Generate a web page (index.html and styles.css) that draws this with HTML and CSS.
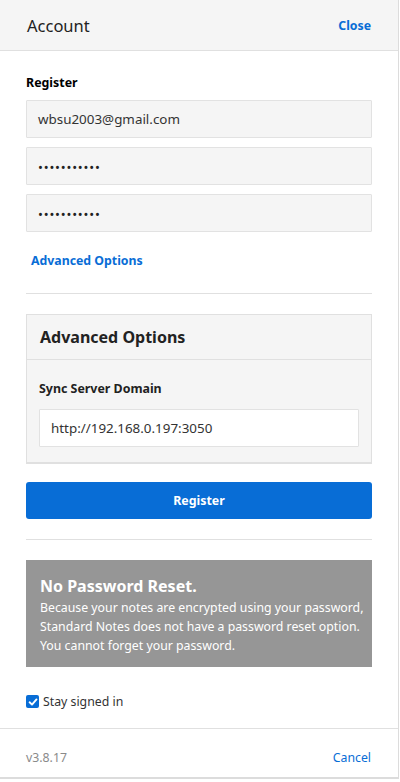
FILE: index.html
```html
<!DOCTYPE html>
<html>
<head>
<meta charset="utf-8">
<link rel="stylesheet" href="styles.css">
</head>
<body>
<div class="panel">
  <div class="header">
    <div class="title">Account</div>
    <a class="link bold">Close</a>
  </div>
  <div class="content">
    <div class="section-title">Register</div>
    <div class="fields">
      <div class="field">wbsu2003@gmail.com</div>
      <div class="field dots">•••••••••••</div>
      <div class="field dots">•••••••••••</div>
    </div>
    <a class="link bold adv-link">Advanced Options</a>
    <div class="hr first-hr"></div>
    <div class="adv">
      <div class="adv-head">Advanced Options</div>
      <div class="adv-body">
        <div class="adv-label">Sync Server Domain</div>
        <div class="field white">http://192.168.0.197:3050</div>
      </div>
    </div>
    <div class="button">Register</div>
    <div class="hr"></div>
    <div class="notice">
      <div class="notice-title">No Password Reset.</div>
      <div class="notice-text">Because your notes are encrypted using your password, Standard Notes does not have a password reset option. You cannot forget your password.</div>
    </div>
    <label class="check">
      <span class="box"><svg width="10" height="10" viewBox="0 0 10 10"><path d="M1.6 5.3 L4 7.6 L8.5 2.4" fill="none" stroke="#fff" stroke-width="1.9" stroke-linecap="round" stroke-linejoin="round"/></svg></span>
      <span>Stay signed in</span>
    </label>
  </div>
  <div class="footer">
    <span class="version">v3.8.17</span>
    <a class="link">Cancel</a>
  </div>
</div>
</body>
</html>
```
FILE: styles.css
```css
* { box-sizing: border-box; }
html, body { margin: 0; padding: 0; background: #fff; }
body {
  font-family: "Noto Sans", "Open Sans", sans-serif;
  color: #222;
  width: 400px;
  height: 782px;
  overflow: hidden;
}
.panel {
  width: 399px;
  height: 779px;
  border-right: 1px solid #dcdcdc;
  border-bottom: 2px solid #dcdcdc;
  display: flex;
  flex-direction: column;
}
.header {
  height: 51px;
  background: #f5f5f5;
  border-bottom: 1px solid #e0e0e0;
  display: flex;
  align-items: center;
  justify-content: space-between;
  padding: 1px 27px 0 27px;
}
.title { font-size: 16.5px; color: #222; }
.link { color: #086dd6; font-size: 12.3px; }
.bold { font-weight: 700; }
.content {
  flex: 1;
  padding: 22px 26px 0 26px;
  border-bottom: 1px solid #e0e0e0;
}
.section-title { font-size: 12.4px; font-weight: 700; color: #000; line-height: 20px; margin-bottom: 7px; }
.fields { display: flex; flex-direction: column; gap: 9px; }
.field {
  height: 38px;
  background: #f5f5f5;
  border: 1px solid #e2e2e2;
  border-radius: 1px;
  padding: 0 11px;
  display: flex;
  align-items: center;
  font-size: 13.4px;
  color: #333;
}
.field.dots { font-size: 13px; letter-spacing: 0.8px; color: #222; padding-top: 1px; }
.field.white { background: #fff; }
.adv-link { display: block; margin: 20px 0 0 5px; line-height: 18px; }
.hr { height: 1px; background: #e0e0e0; }
.first-hr { margin-top: 23px; }
.adv {
  margin-top: 20px;
  background: #f5f5f5;
  border: 1px solid #e0e0e0;
  border-bottom: 2px solid #e0e0e0;
}
.adv-head {
  height: 45px;
  border-bottom: 1px solid #e0e0e0;
  display: flex;
  align-items: center;
  padding: 0 13px;
  font-size: 16px;
  font-weight: 700;
  color: #222;
}
.adv-body { padding: 19px 12px 15px 12px; }
.adv-label { font-size: 12.4px; font-weight: 700; color: #222; line-height: 20px; margin-bottom: 10px; }
.button {
  margin-top: 18px;
  height: 37px;
  background: #086dd6;
  border-radius: 3px;
  color: #fff;
  font-size: 12.4px;
  font-weight: 700;
  display: flex;
  align-items: center;
  justify-content: center;
  margin-bottom: 20px;
}
.notice {
  margin-top: 20px;
  background: #969696;
  padding: 14px 6px 12px 14px;
  color: #fff;
}
.notice-title { font-size: 16px; font-weight: 700; line-height: 24px; }
.notice-text { font-size: 12.3px; line-height: 19px; }
.check {
  display: flex;
  align-items: center;
  gap: 4px;
  margin-top: 26px;
  font-size: 12.3px;
  color: #333;
}
.box {
  width: 13px; height: 13px;
  background: #086dd6;
  border-radius: 2px;
  display: flex; align-items: center; justify-content: center;
}
.footer {
  height: 48px;
  display: flex;
  align-items: center;
  justify-content: space-between;
  padding: 8px 27px 0 26px;
  font-size: 12.3px;
}
.version { color: #8a8a8a; }
```
